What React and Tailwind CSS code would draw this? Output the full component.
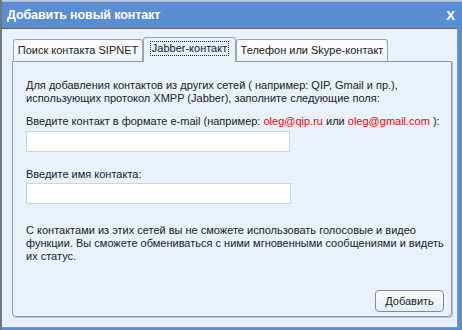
export default function App() {
  const f = { fontFamily: '"Liberation Sans", Arial, sans-serif' };
  return (
    <div className="w-[462px] h-[330px] flex flex-col bg-[#5b8dd4] border-l-2 border-[#6f7784] overflow-hidden" style={f}>
      <div className="h-[2px] bg-gradient-to-b from-[#c9d3df] to-[#9fb6d8]" />
      <div className="h-[26px] flex items-center justify-between pl-[5px] pr-[7px]">
        <span className="text-white font-bold text-[12.5px] tracking-[-0.1px] leading-none">Добавить новый контакт</span>
        <span className="text-white font-bold text-[13px] leading-none">X</span>
      </div>
      <div className="flex-1 mr-[4px] mb-[2px] bg-[#e8f1fc] border-t border-t-[#5a6472] border-r border-r-[#8e98a5] border-b border-b-[#8e98a5] pt-[8px] pl-[10px] pr-[5px] text-[11px] text-[#222]">
        <div className="flex items-end h-[24px] pl-[1px]">
          <div className="h-[22px] w-[130px] flex items-center justify-center border border-[#9aa5b4] border-b-0 rounded-t-[3px] bg-gradient-to-b from-white to-[#eef3f9]">
            Поиск контакта SIPNET
          </div>
          <div className="h-[25px] w-[93px] -mb-px relative z-10 flex items-start justify-center pt-[4px] border border-[#9aa5b4] border-b-0 rounded-t-[3px] bg-[#e8f1fc]">
            <span className="outline outline-1 outline-dotted outline-[#222] px-[1px] leading-[13px]">Jabber-контакт</span>
          </div>
          <div className="h-[22px] w-[152px] flex items-center justify-center border border-[#9aa5b4] border-b-0 rounded-t-[3px] bg-gradient-to-b from-white to-[#eef3f9]">
            Телефон или Skype-контакт
          </div>
        </div>
        <div className="w-[440px] h-[256px] border border-[#8e99a8] rounded-b-[4px] shadow-[1px_1px_0_#b8c0cb] pt-[17px] pl-[13px] pr-[10px] leading-[13px] flex flex-col">
          <p className="whitespace-nowrap">Для добавления контактов из других сетей ( например: QIP, Gmail и пр.),<br />использующих протокол XMPP (Jabber), заполните следующие поля:</p>
          <p className="mt-[10px] whitespace-nowrap">Введите контакт в формате e-mail (например: <span className="text-[#ff0000]">oleg@qip.ru</span> или <span className="text-[#ff0000]">oleg@gmail.com</span> ):</p>
          <div className="mt-[3px] w-[264px] h-[21px] bg-white border border-[#c9d5e4]" />
          <p className="mt-[16px]">Введите имя контакта:</p>
          <div className="mt-[2px] w-[265px] h-[21px] bg-white border border-[#c9d5e4]" />
          <p className="mt-[20px] whitespace-nowrap">С контактами из этих сетей вы не сможете использовать голосовые и видео<br />функции. Вы сможете обмениваться с ними мгновенными сообщениями и видеть<br />их статус.</p>
          <div className="flex-1" />
          <div className="flex justify-end mb-[4px] mr-[-3px]">
            <div className="w-[69px] h-[22px] flex items-center justify-center border border-[#7f8a99] rounded-[4px] bg-gradient-to-b from-white to-[#e4ebf5]">Добавить</div>
          </div>
        </div>
      </div>
    </div>
  );
}
